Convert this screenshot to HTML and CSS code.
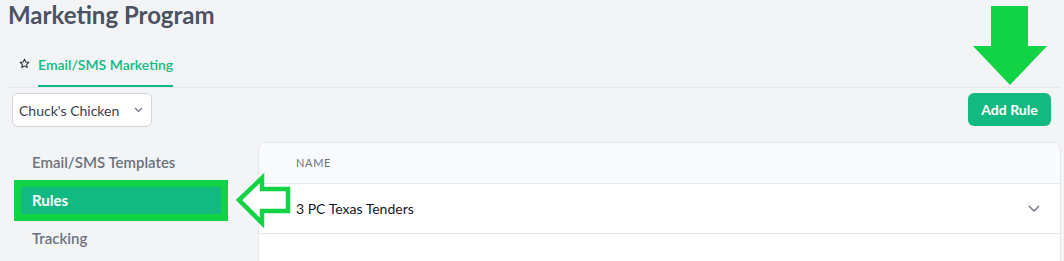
FILE: index.html
```html
<!DOCTYPE html>
<html lang="en">
<head>
    <meta charset="UTF-8">
    <meta name="viewport" content="width=device-width, initial-scale=1.0">
    <title>Marketing Program</title>
    <link rel="stylesheet" href="styles.css">
</head>
<body>
    <div class="page">
        <h1 class="title">Marketing Program</h1>

        <div class="tabs">
            <svg class="star" width="11" height="11" viewBox="0 0 24 24" fill="none" stroke="#1f2937" stroke-width="2.2" stroke-linejoin="round">
                <path d="M12 2.5l2.9 6.1 6.6.8-4.9 4.6 1.3 6.6L12 17.3l-5.9 3.3 1.3-6.6-4.9-4.6 6.6-.8z"/>
            </svg>
            <span class="tab active">Email/SMS Marketing</span>
        </div>

        <div class="toolbar">
            <div class="select">
                <span>Chuck's Chicken</span>
                <svg width="9" height="6" viewBox="0 0 9 6" fill="none" stroke="#6b7280" stroke-width="1.2"><path d="M1 1l3.5 3.5L8 1"/></svg>
            </div>
            <button class="btn">Add Rule</button>
        </div>

        <div class="content">
            <nav class="side">
                <a class="side-item">Email/SMS Templates</a>
                <a class="side-item active">Rules</a>
                <a class="side-item">Tracking</a>
            </nav>

            <div class="card">
                <div class="card-head">Name</div>
                <div class="card-row">
                    <span>3 PC Texas Tenders</span>
                    <svg width="12" height="7" viewBox="0 0 12 7" fill="none" stroke="#6b7280" stroke-width="1.3"><path d="M1 1l5 5 5-5"/></svg>
                </div>
                <div class="card-row empty"></div>
            </div>
        </div>

        <!-- annotation arrows -->
        <svg class="arrow-down" width="80" height="90" viewBox="0 0 80 90">
            <polygon points="21,6 58,6 58,46 77,46 40,85 3,46 21,46" fill="#12d246"/>
        </svg>
        <svg class="arrow-left" width="64" height="60" viewBox="0 0 64 60">
            <polygon points="6,28 29,6 29,17 55,17 55,39 29,39 29,51" fill="#ffffff" stroke="#12d246" stroke-width="4.5"/>
        </svg>
    </div>
</body>
</html>
```

FILE: styles.css
```css
body {
    margin: 0;
    background: #f3f4f6;
    font-family: 'Lato', 'Noto Sans', sans-serif;
    color: #1f2937;
}

.page {
    position: relative;
    height: 261px;
    overflow: hidden;
    padding: 0 3px 0 8px;
}

.title {
    margin: 0;
    font-size: 24px;
    line-height: 29px;
    font-weight: 700;
    color: #4b5261;
}

.tabs {
    display: flex;
    align-items: flex-end;
    margin-top: 26px;
    padding-left: 11px;
    border-bottom: 1px solid #e5e7eb;
}

.star {
    margin: 0 8px 18px 0;
}

.tab {
    font-size: 14px;
    line-height: 20px;
    padding-bottom: 10px;
    font-weight: 600;
    color: #10b981;
}

.tab.active {
    border-bottom: 2px solid #10b981;
}

.toolbar {
    display: flex;
    justify-content: space-between;
    align-items: flex-start;
    margin-top: 5px;
    padding: 0 10px 0 4px;
}

.select {
    display: flex;
    align-items: center;
    justify-content: space-between;
    width: 124px;
    height: 32px;
    padding: 0 8px 0 6px;
    background: #ffffff;
    border: 1px solid #d1d5db;
    border-radius: 6px;
    font-size: 14px;
    color: #374151;
}

.btn {
    height: 33px;
    width: 83px;
    border: none;
    border-radius: 6px;
    background: #12b981;
    color: #ffffff;
    font-family: inherit;
    font-size: 14px;
    font-weight: 700;
}

.content {
    display: flex;
    margin-top: 15px;
}

.side {
    width: 237px;
    padding: 7px 0 0 13px;
    display: flex;
    flex-direction: column;
    gap: 11px;
}

.side-item {
    display: block;
    width: 189px;
    height: 27px;
    line-height: 27px;
    padding-left: 11px;
    font-size: 15px;
    font-weight: 600;
    color: #6b7280;
}

.side-item.active {
    background: #12b981;
    color: #ffffff;
    font-weight: 700;
    outline: 7px solid #12d246;
}

.card {
    flex: 1;
    background: #ffffff;
    border: 1px solid #e5e7eb;
    border-radius: 8px 8px 0 0;
}

.card-head {
    height: 40px;
    line-height: 40px;
    padding-left: 37px;
    background: #f9fafb;
    border-bottom: 1px solid #e5e7eb;
    border-radius: 8px 8px 0 0;
    font-size: 11px;
    letter-spacing: 0.06em;
    text-transform: uppercase;
    color: #6b7280;
}

.card-row {
    display: flex;
    align-items: center;
    justify-content: space-between;
    height: 49px;
    padding: 0 20px 0 37px;
    border-bottom: 1px solid #e5e7eb;
    font-size: 14px;
    color: #111827;
}

.arrow-down {
    position: absolute;
    left: 970px;
    top: 0;
}

.arrow-left {
    position: absolute;
    left: 233px;
    top: 172px;
}
```
